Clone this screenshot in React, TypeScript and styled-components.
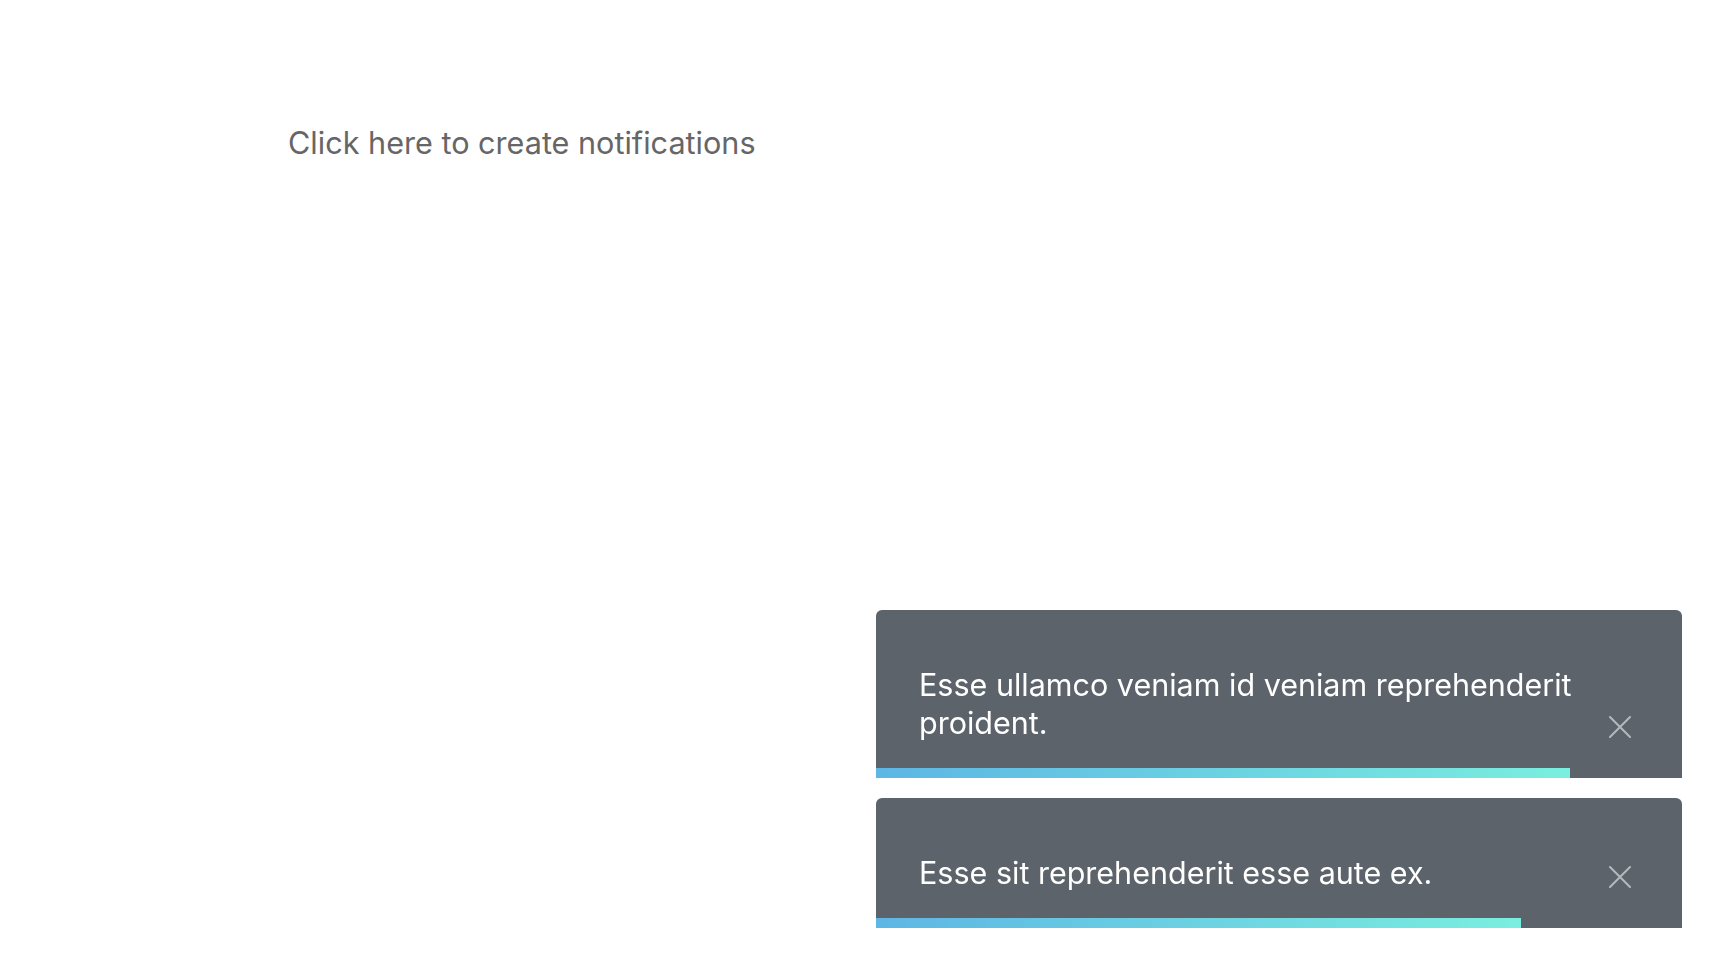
import React from "react";
import styled, { createGlobalStyle } from "styled-components";

const GlobalStyle = createGlobalStyle`
  html, body {
    margin: 0;
    padding: 0;
    background: #ffffff;
    font-family: Inter, "Noto Sans", "Liberation Sans", sans-serif;
  }
`;

const Page = styled.main`
  min-height: 100vh;
  box-sizing: border-box;
  padding: 125px 0 0 288px;
`;

const Trigger = styled.button`
  border: none;
  background: none;
  padding: 0;
  margin: 0;
  font-family: inherit;
  font-size: 30.6px;
  line-height: 36px;
  color: #666666;
  cursor: pointer;
`;

const ToastStack = styled.div`
  position: fixed;
  right: 34px;
  bottom: 38px;
  width: 806px;
  display: flex;
  flex-direction: column;
  gap: 20px;
`;

const Toast = styled.div`
  background: #5c636a;
  border-radius: 6px 6px 0 0;
  overflow: hidden;
  display: flex;
  flex-direction: column;
`;

const Body = styled.div`
  display: flex;
  align-items: flex-end;
  gap: 20px;
  padding: 56px 51px 26px 43px;
`;

const Message = styled.p`
  flex: 1;
  margin: 0;
  color: #ffffff;
  font-size: 30.5px;
  line-height: 38px;
`;

const Close = styled.button`
  flex: none;
  width: 22px;
  height: 22px;
  margin-bottom: 4px;
  padding: 0;
  border: none;
  background: none;
  color: #b4b9bd;
  cursor: pointer;
  display: flex;
  align-items: center;
  justify-content: center;
`;

const Track = styled.div`
  height: 10px;
`;

const Progress = styled.div`
  height: 100%;
  background: linear-gradient(to right, #5db6e4, #7aeedf);
`;

const toasts = [
  { id: 1, text: "Esse ullamco veniam id veniam reprehenderit proident.", left: 86.1 },
  { id: 2, text: "Esse sit reprehenderit esse aute ex.", left: 80 },
];

function CloseIcon() {
  return (
    <svg width="22" height="22" viewBox="0 0 22 22" fill="none">
      <path d="M1 1L21 21M21 1L1 21" stroke="currentColor" strokeWidth="2" strokeLinecap="round" />
    </svg>
  );
}

export default function App() {
  return (
    <>
      <GlobalStyle />
      <Page>
        <Trigger>Click here to create notifications</Trigger>
      </Page>
      <ToastStack>
        {toasts.map((t) => (
          <Toast key={t.id}>
            <Body>
              <Message>{t.text}</Message>
              <Close aria-label="Close">
                <CloseIcon />
              </Close>
            </Body>
            <Track>
              <Progress style={{ width: `${t.left}%` }} />
            </Track>
          </Toast>
        ))}
      </ToastStack>
    </>
  );
}
